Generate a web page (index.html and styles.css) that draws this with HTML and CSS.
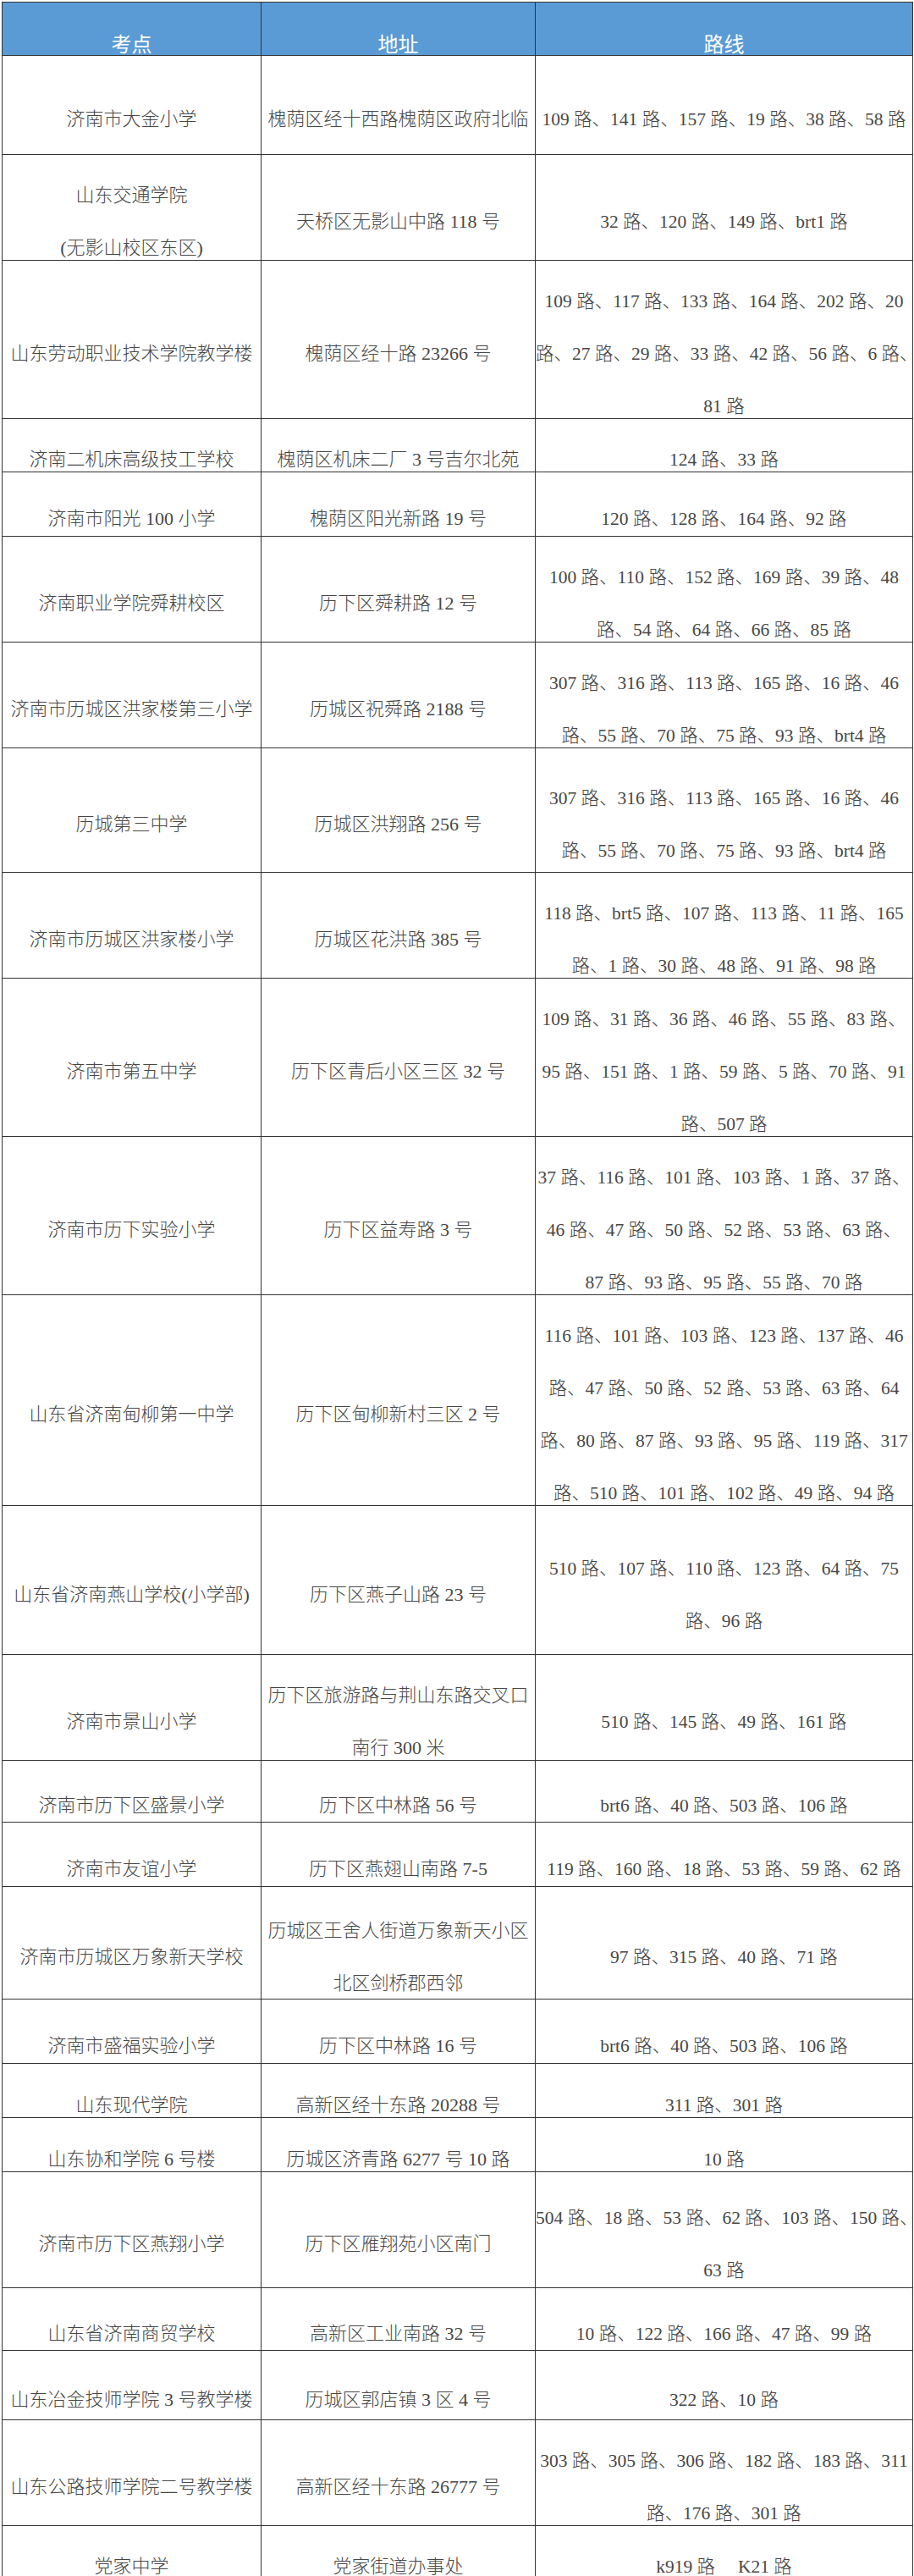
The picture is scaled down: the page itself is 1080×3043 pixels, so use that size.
FILE: index.html
```html
<!DOCTYPE html>
<html lang="zh-CN">
<head>
<meta charset="utf-8">
<title>考点路线</title>
<link rel="stylesheet" href="styles.css">
</head>
<body>
<table class="sheet">
  <colgroup>
    <col class="c-name">
    <col class="c-addr">
    <col class="c-route">
  </colgroup>
  <thead>
    <tr class="head"><th><div class="ln">考点</div></th><th><div class="ln">地址</div></th><th><div class="ln">路线</div></th></tr>
  </thead>
  <tbody>
    <tr class="h118"><td><div class="ln">济南市大金小学</div></td><td><div class="ln">槐荫区经十西路槐荫区政府北临</div></td><td class="route"><div class="ln">109 路、141 路、157 路、19 路、38 路、58 路</div></td></tr>
    <tr class="h124"><td><div class="ln">山东交通学院</div><div class="ln">(无影山校区东区)</div></td><td><div class="ln">天桥区无影山中路 118 号</div></td><td class="route"><div class="ln">32 路、120 路、149 路、brt1 路</div></td></tr>
    <tr class="h186"><td><div class="ln">山东劳动职业技术学院教学楼</div></td><td><div class="ln">槐荫区经十路 23266 号</div></td><td class="route"><div class="ln">109 路、117 路、133 路、164 路、202 路、20</div><div class="ln">路、27 路、29 路、33 路、42 路、56 路、6 路、</div><div class="ln">81 路</div></td></tr>
    <tr class="h62"><td><div class="ln">济南二机床高级技工学校</div></td><td><div class="ln">槐荫区机床二厂 3 号吉尔北苑</div></td><td class="route"><div class="ln">124 路、33 路</div></td></tr>
    <tr class="h77"><td><div class="ln">济南市阳光 100 小学</div></td><td><div class="ln">槐荫区阳光新路 19 号</div></td><td class="route"><div class="ln">120 路、128 路、164 路、92 路</div></td></tr>
    <tr class="h124"><td><div class="ln">济南职业学院舜耕校区</div></td><td><div class="ln">历下区舜耕路 12 号</div></td><td class="route"><div class="ln">100 路、110 路、152 路、169 路、39 路、48</div><div class="ln">路、54 路、64 路、66 路、85 路</div></td></tr>
    <tr class="h123"><td><div class="ln">济南市历城区洪家楼第三小学</div></td><td><div class="ln">历城区祝舜路 2188 号</div></td><td class="route"><div class="ln">307 路、316 路、113 路、165 路、16 路、46</div><div class="ln">路、55 路、70 路、75 路、93 路、brt4 路</div></td></tr>
    <tr class="h148"><td><div class="ln">历城第三中学</div></td><td><div class="ln">历城区洪翔路 256 号</div></td><td class="route"><div class="ln">307 路、316 路、113 路、165 路、16 路、46</div><div class="ln">路、55 路、70 路、75 路、93 路、brt4 路</div></td></tr>
    <tr class="h125"><td><div class="ln">济南市历城区洪家楼小学</div></td><td><div class="ln">历城区花洪路 385 号</div></td><td class="route"><div class="ln">118 路、brt5 路、107 路、113 路、11 路、165</div><div class="ln">路、1 路、30 路、48 路、91 路、98 路</div></td></tr>
    <tr class="h184"><td><div class="ln">济南市第五中学</div></td><td><div class="ln">历下区青后小区三区 32 号</div></td><td class="route"><div class="ln">109 路、31 路、36 路、46 路、55 路、83 路、</div><div class="ln">95 路、151 路、1 路、59 路、5 路、70 路、91</div><div class="ln">路、507 路</div></td></tr>
    <tr class="h186"><td><div class="ln">济南市历下实验小学</div></td><td><div class="ln">历下区益寿路 3 号</div></td><td class="route"><div class="ln">37 路、116 路、101 路、103 路、1 路、37 路、</div><div class="ln">46 路、47 路、50 路、52 路、53 路、63 路、</div><div class="ln">87 路、93 路、95 路、55 路、70 路</div></td></tr>
    <tr class="h246"><td><div class="ln">山东省济南甸柳第一中学</div></td><td><div class="ln">历下区甸柳新村三区 2 号</div></td><td class="route"><div class="ln">116 路、101 路、103 路、123 路、137 路、46</div><div class="ln">路、47 路、50 路、52 路、53 路、63 路、64</div><div class="ln">路、80 路、87 路、93 路、95 路、119 路、317</div><div class="ln">路、510 路、101 路、102 路、49 路、94 路</div></td></tr>
    <tr class="h177"><td><div class="ln">山东省济南燕山学校(小学部)</div></td><td><div class="ln">历下区燕子山路 23 号</div></td><td class="route"><div class="ln">510 路、107 路、110 路、123 路、64 路、75</div><div class="ln">路、96 路</div></td></tr>
    <tr class="h123"><td><div class="ln">济南市景山小学</div></td><td><div class="ln">历下区旅游路与荆山东路交叉口</div><div class="ln">南行 300 米</div></td><td class="route"><div class="ln">510 路、145 路、49 路、161 路</div></td></tr>
    <tr class="h74"><td><div class="ln">济南市历下区盛景小学</div></td><td><div class="ln">历下区中林路 56 号</div></td><td class="route"><div class="ln">brt6 路、40 路、503 路、106 路</div></td></tr>
    <tr class="h77"><td><div class="ln">济南市友谊小学</div></td><td><div class="ln">历下区燕翅山南路 7-5</div></td><td class="route"><div class="ln">119 路、160 路、18 路、53 路、59 路、62 路</div></td></tr>
    <tr class="h134"><td><div class="ln">济南市历城区万象新天学校</div></td><td><div class="ln">历城区王舍人街道万象新天小区</div><div class="ln">北区剑桥郡西邻</div></td><td class="route"><div class="ln">97 路、315 路、40 路、71 路</div></td></tr>
    <tr class="h77"><td><div class="ln">济南市盛福实验小学</div></td><td><div class="ln">历下区中林路 16 号</div></td><td class="route"><div class="ln">brt6 路、40 路、503 路、106 路</div></td></tr>
    <tr class="h65"><td><div class="ln">山东现代学院</div></td><td><div class="ln">高新区经十东路 20288 号</div></td><td class="route"><div class="ln">311 路、301 路</div></td></tr>
    <tr class="h65"><td><div class="ln">山东协和学院 6 号楼</div></td><td><div class="ln">历城区济青路 6277 号 10 路</div></td><td class="route"><div class="ln">10 路</div></td></tr>
    <tr class="h138"><td><div class="ln">济南市历下区燕翔小学</div></td><td><div class="ln">历下区雁翔苑小区南门</div></td><td class="route"><div class="ln">504 路、18 路、53 路、62 路、103 路、150 路、</div><div class="ln">63 路</div></td></tr>
    <tr class="h75"><td><div class="ln">山东省济南商贸学校</div></td><td><div class="ln">高新区工业南路 32 号</div></td><td class="route"><div class="ln">10 路、122 路、166 路、47 路、99 路</div></td></tr>
    <tr class="h83"><td><div class="ln">山东冶金技师学院 3 号教学楼</div></td><td><div class="ln">历城区郭店镇 3 区 4 号</div></td><td class="route"><div class="ln">322 路、10 路</div></td></tr>
    <tr class="h124"><td><div class="ln">山东公路技师学院二号教学楼</div></td><td><div class="ln">高新区经十东路 26777 号</div></td><td class="route"><div class="ln">303 路、305 路、306 路、182 路、183 路、311</div><div class="ln">路、176 路、301 路</div></td></tr>
    <tr class="h62"><td><div class="ln">党家中学</div></td><td><div class="ln">党家街道办事处</div></td><td class="route"><div class="ln">k919 路&nbsp;&nbsp;&nbsp;&nbsp;&nbsp;K21 路</div></td></tr>
  </tbody>
</table>
</body>
</html>
```
FILE: styles.css
```css
html, body {
  margin: 0;
  padding: 0;
  background: #ffffff;
}

.sheet {
  border-collapse: collapse;
  table-layout: fixed;
  width: 1076px;
  margin: 2px 0 0 2px;
}

.c-name { width: 306px; }
.c-addr { width: 324px; }
.c-route { width: 446px; }

.sheet th,
.sheet td {
  border: 1px solid #333333;
  padding: 0;
  text-align: center;
  vertical-align: middle;
  white-space: nowrap;
  overflow: visible;
}

.sheet th {
  background: #5b9bd5;
  color: #ffffff;
  font-family: "Noto Sans CJK SC", "Noto Sans", sans-serif;
  font-weight: 400;
  font-size: 24px;
}

.sheet td {
  color: #474747;
  font-family: "Liberation Serif", "Noto Sans CJK SC", serif;
  font-weight: 300;
  font-size: 22px;
}

.sheet td.route {
  font-size: 21.5px;
}

/* one rendered text line: fixed 62px pitch, glyphs sitting low in the line */
.ln {
  box-sizing: border-box;
  height: 62px;
  padding-top: 34px;
  line-height: 28px;
}

/* row heights (collapsed borders add 1px to each row) */
.head { height: 61px; }
.h62 { height: 61px; }
.h65 { height: 64px; }
.h74 { height: 73px; }
.h75 { height: 74px; }
.h77 { height: 76px; }
.h83 { height: 82px; }
.h118 { height: 117px; }
.h123 { height: 122px; }
.h124 { height: 123px; }
.h125 { height: 124px; }
.h134 { height: 133px; }
.h138 { height: 137px; }
.h148 { height: 147px; }
.h177 { height: 176px; }
.h184 { height: 183px; }
.h186 { height: 185px; }
.h246 { height: 245px; }
```
